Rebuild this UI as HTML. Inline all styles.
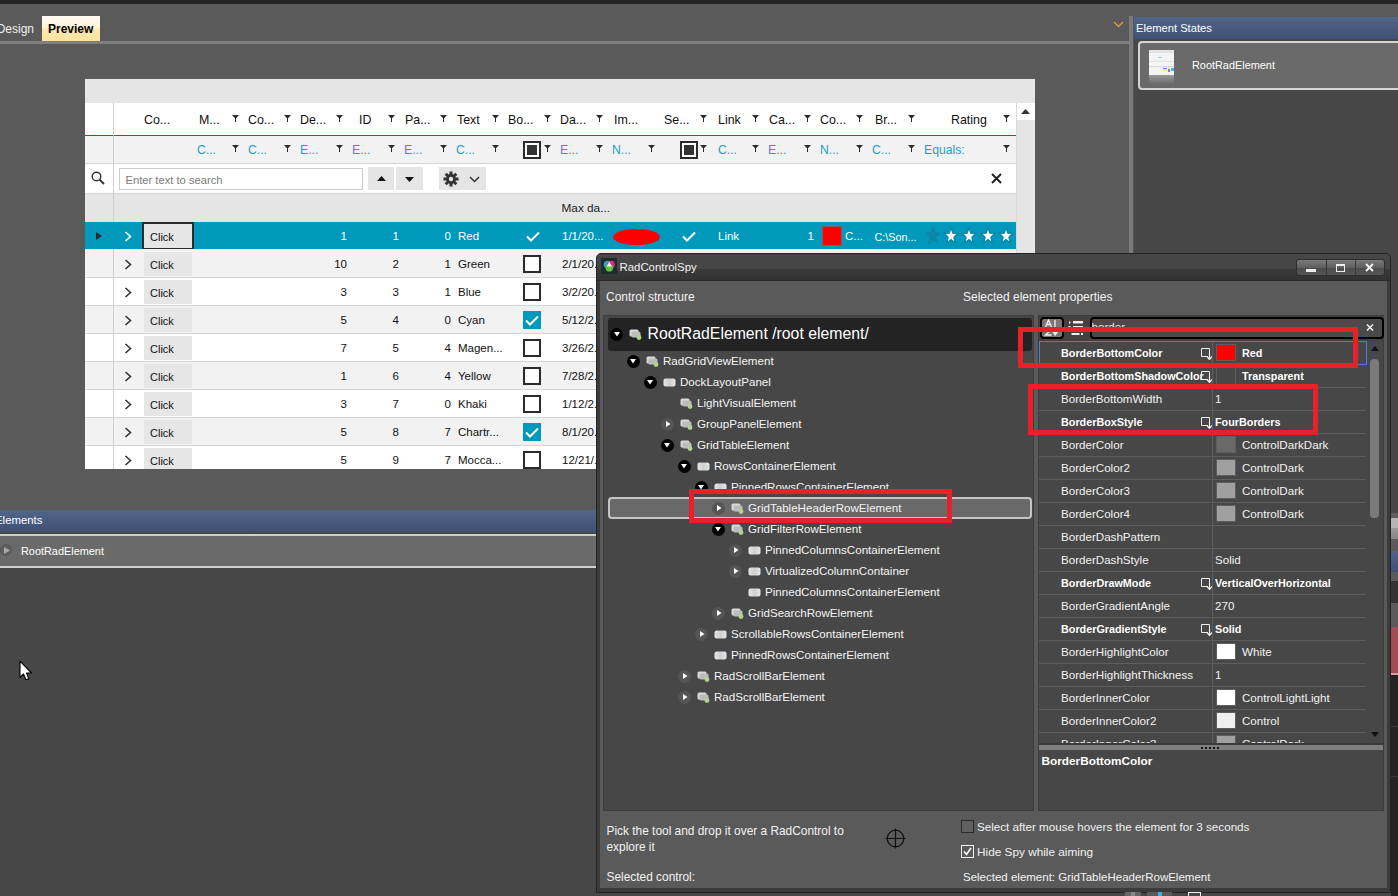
<!DOCTYPE html>
<html><head><meta charset="utf-8">
<style>
*{margin:0;padding:0;box-sizing:border-box}
html,body{width:1398px;height:896px;overflow:hidden;background:#5a5a5a;font-family:"Liberation Sans",sans-serif;font-size:12px;color:#000;position:relative}
.a{position:absolute}
.t{position:absolute;white-space:nowrap;line-height:1}
svg.a{display:block}
</style></head><body>
<div class="a" style="left:0px;top:0px;width:1398px;height:4px;background:#232323"></div>
<div class="t" style="left:-26px;width:60px;text-align:right;top:22.84px;font-size:12px;color:#f0f0f0;font-weight:normal;">Design</div>
<div class="a" style="left:42px;top:16px;width:58px;height:25px;background:linear-gradient(#fffaf0 0,#fff3da 45%,#fde7ab 55%,#fde3a2 100%)"></div>
<div class="t" style="left:48px;top:22.84px;font-size:12px;color:#000;font-weight:bold;">Preview</div>
<div class="a" style="left:0px;top:41px;width:1129px;height:3px;background:#7f7f7f"></div>
<svg class="a" style="left:1113px;top:21px" width="11" height="7" viewBox="0 0 11 7"><path d="M1 1L5.5 5.5L10 1" stroke="#d9a24a" stroke-width="1.3" fill="none"/></svg>
<div class="a" style="left:1129px;top:16px;width:4px;height:880px;background:#7a7a7a"></div>
<div class="a" style="left:1133px;top:16px;width:1px;height:880px;background:#555"></div>
<div class="a" style="left:1134px;top:17px;width:264px;height:22px;background:linear-gradient(#52668a,#3e5074)"></div>
<div class="t" style="left:1136px;top:22.52px;font-size:11.2px;color:#fff;font-weight:normal;">Element States</div>
<div class="a" style="left:1134px;top:39px;width:264px;height:857px;background:#474747"></div>
<div class="a" style="left:1138px;top:41px;width:270px;height:49px;background:#6a6a6a;border:2px solid #d4d4d4;border-radius:4px"></div>
<div class="a" style="left:1149px;top:50px;width:25px;height:25px;background:#f4f4f4"></div>
<div class="a" style="left:1149px;top:50px;width:25px;height:3px;background:#e4e4e4"></div>
<div class="a" style="left:1149px;top:61px;width:25px;height:1px;background:#e0e0e0"></div>
<div class="a" style="left:1158px;top:57px;width:4px;height:1px;background:#9cd0e8"></div>
<div class="a" style="left:1149px;top:66px;width:25px;height:1px;background:#d8d8d8"></div>
<div class="a" style="left:1163px;top:68px;width:4px;height:1px;background:#7a7aff"></div>
<div class="a" style="left:1163px;top:69px;width:4px;height:2px;background:#f0f070"></div>
<div class="a" style="left:1168px;top:67px;width:2px;height:2px;background:#f0f070"></div>
<div class="a" style="left:1168px;top:69px;width:2px;height:3px;background:#9a70c0"></div>
<div class="a" style="left:1171px;top:68px;width:3px;height:3px;background:#50b0c8"></div>
<div class="a" style="left:1149px;top:75px;width:25px;height:9px;background:linear-gradient(#9a9a9a,#6a6a6a)"></div>
<div class="t" style="left:1192px;top:59.77px;font-size:10.9px;color:#fff;font-weight:normal;">RootRadElement</div>
<div class="a" style="left:0px;top:510px;width:1128px;height:22px;background:linear-gradient(#52668a,#3e5074)"></div>
<div class="t" style="left:-5px;top:515.35px;font-size:11.4px;color:#fff;font-weight:normal;">Elements</div>
<div class="a" style="left:0px;top:532px;width:1128px;height:364px;background:#474747"></div>
<div class="a" style="left:-4px;top:534px;width:1132px;height:34px;background:#6a6a6a;border-top:2px solid #cfcfcf;border-bottom:2px solid #cfcfcf"></div>
<div class="a" style="left:0px;top:544px;width:12px;height:12px;border-radius:50%;background:#5e5e5e;border:1px solid #555"></div>
<svg class="a" style="left:4px;top:546.5px" width="6" height="7" viewBox="0 0 6 7"><path d="M0 0L6 3.5L0 7Z" fill="#a8a8a8"/></svg>
<div class="t" style="left:21px;top:545.77px;font-size:10.9px;color:#fff;font-weight:normal;">RootRadElement</div>
<svg class="a" style="left:19px;top:660px" width="13" height="21" viewBox="0 0 13 21"><path d="M1 1.2V17.5L4.5 14L7 19.8L9.8 18.8L7.5 13H12.5Z" fill="#fff" stroke="#000" stroke-width="1.1" stroke-linejoin="round"/></svg>
<div class="a" style="left:0;top:0;width:1398px;height:469px;overflow:hidden">
<div class="a" style="left:85px;top:79px;width:950px;height:390px;background:#fff"></div>
<div class="a" style="left:85px;top:79px;width:950px;height:24px;background:#e5e5e5"></div>
<div class="a" style="left:85px;top:103px;width:932px;height:32px;background:#fff"></div>
<div class="a" style="left:85px;top:135px;width:932px;height:1px;background:#e8161b"></div>
<div class="a" style="left:85px;top:136px;width:932px;height:27px;background:#f2f2f2"></div>
<div class="a" style="left:85px;top:163px;width:932px;height:1px;background:#d4d4d4"></div>
<div class="a" style="left:85px;top:164px;width:932px;height:29px;background:#fff"></div>
<div class="a" style="left:85px;top:193px;width:932px;height:1px;background:#d4d4d4"></div>
<div class="a" style="left:85px;top:194px;width:932px;height:28px;background:#e5e5e5"></div>
<div class="a" style="left:113px;top:103px;width:1px;height:366px;background:#cfcfcf"></div>
<div class="a" style="left:1016px;top:103px;width:19px;height:366px;background:#e5e5e5;border-left:1px solid #d8d8d8"></div>
<div class="a" style="left:1017px;top:103px;width:18px;height:17px;background:#fff"></div>
<svg class="a" style="left:1021px;top:109px" width="9" height="5" viewBox="0 0 9 5"><path d="M0 5L4.5 0L9 5Z" fill="#333"/></svg>
<div class="t" style="left:144px;top:113.50px;font-size:12.4px;color:#111;font-weight:normal;">Co...</div>
<div class="t" style="left:199px;top:113.50px;font-size:12.4px;color:#111;font-weight:normal;">M...</div>
<div class="t" style="left:248px;top:113.50px;font-size:12.4px;color:#111;font-weight:normal;">Co...</div>
<div class="t" style="left:300px;top:113.50px;font-size:12.4px;color:#111;font-weight:normal;">De...</div>
<div class="t" style="left:359px;top:113.50px;font-size:12.4px;color:#111;font-weight:normal;">ID</div>
<div class="t" style="left:405px;top:113.50px;font-size:12.4px;color:#111;font-weight:normal;">Pa...</div>
<div class="t" style="left:457px;top:113.50px;font-size:12.4px;color:#111;font-weight:normal;">Text</div>
<div class="t" style="left:508px;top:113.50px;font-size:12.4px;color:#111;font-weight:normal;">Bo...</div>
<div class="t" style="left:560px;top:113.50px;font-size:12.4px;color:#111;font-weight:normal;">Da...</div>
<div class="t" style="left:614px;top:113.50px;font-size:12.4px;color:#111;font-weight:normal;">Im...</div>
<div class="t" style="left:664px;top:113.50px;font-size:12.4px;color:#111;font-weight:normal;">Se...</div>
<div class="t" style="left:718px;top:113.50px;font-size:12.4px;color:#111;font-weight:normal;">Link</div>
<div class="t" style="left:769px;top:113.50px;font-size:12.4px;color:#111;font-weight:normal;">Ca...</div>
<div class="t" style="left:820px;top:113.50px;font-size:12.4px;color:#111;font-weight:normal;">Co...</div>
<div class="t" style="left:875px;top:113.50px;font-size:12.4px;color:#111;font-weight:normal;">Br...</div>
<div class="t" style="left:951px;top:113.50px;font-size:12.4px;color:#111;font-weight:normal;">Rating</div>
<svg class="a" style="left:232px;top:115px" width="7" height="7" viewBox="0 0 7 7"><path d="M0 0H7L4 3.2V7H3V3.2Z" fill="#2b2b2b"/></svg>
<svg class="a" style="left:284px;top:115px" width="7" height="7" viewBox="0 0 7 7"><path d="M0 0H7L4 3.2V7H3V3.2Z" fill="#2b2b2b"/></svg>
<svg class="a" style="left:336px;top:115px" width="7" height="7" viewBox="0 0 7 7"><path d="M0 0H7L4 3.2V7H3V3.2Z" fill="#2b2b2b"/></svg>
<svg class="a" style="left:388px;top:115px" width="7" height="7" viewBox="0 0 7 7"><path d="M0 0H7L4 3.2V7H3V3.2Z" fill="#2b2b2b"/></svg>
<svg class="a" style="left:440px;top:115px" width="7" height="7" viewBox="0 0 7 7"><path d="M0 0H7L4 3.2V7H3V3.2Z" fill="#2b2b2b"/></svg>
<svg class="a" style="left:492px;top:115px" width="7" height="7" viewBox="0 0 7 7"><path d="M0 0H7L4 3.2V7H3V3.2Z" fill="#2b2b2b"/></svg>
<svg class="a" style="left:544px;top:115px" width="7" height="7" viewBox="0 0 7 7"><path d="M0 0H7L4 3.2V7H3V3.2Z" fill="#2b2b2b"/></svg>
<svg class="a" style="left:596px;top:115px" width="7" height="7" viewBox="0 0 7 7"><path d="M0 0H7L4 3.2V7H3V3.2Z" fill="#2b2b2b"/></svg>
<svg class="a" style="left:700px;top:115px" width="7" height="7" viewBox="0 0 7 7"><path d="M0 0H7L4 3.2V7H3V3.2Z" fill="#2b2b2b"/></svg>
<svg class="a" style="left:752px;top:115px" width="7" height="7" viewBox="0 0 7 7"><path d="M0 0H7L4 3.2V7H3V3.2Z" fill="#2b2b2b"/></svg>
<svg class="a" style="left:804px;top:115px" width="7" height="7" viewBox="0 0 7 7"><path d="M0 0H7L4 3.2V7H3V3.2Z" fill="#2b2b2b"/></svg>
<svg class="a" style="left:856px;top:115px" width="7" height="7" viewBox="0 0 7 7"><path d="M0 0H7L4 3.2V7H3V3.2Z" fill="#2b2b2b"/></svg>
<svg class="a" style="left:908px;top:115px" width="7" height="7" viewBox="0 0 7 7"><path d="M0 0H7L4 3.2V7H3V3.2Z" fill="#2b2b2b"/></svg>
<svg class="a" style="left:1003px;top:115px" width="7" height="7" viewBox="0 0 7 7"><path d="M0 0H7L4 3.2V7H3V3.2Z" fill="#2b2b2b"/></svg>
<div class="t" style="left:197px;top:143.67px;font-size:12.2px;color:#1e9bc8;font-weight:normal;">C...</div>
<div class="t" style="left:248px;top:143.67px;font-size:12.2px;color:#1e9bc8;font-weight:normal;">C...</div>
<div class="t" style="left:300px;top:143.67px;font-size:12.2px;color:#1e9bc8;font-weight:normal;">E...</div>
<div class="t" style="left:352px;top:143.67px;font-size:12.2px;color:#1e9bc8;font-weight:normal;">E...</div>
<div class="t" style="left:404px;top:143.67px;font-size:12.2px;color:#1e9bc8;font-weight:normal;">E...</div>
<div class="t" style="left:456px;top:143.67px;font-size:12.2px;color:#1e9bc8;font-weight:normal;">C...</div>
<div class="t" style="left:560px;top:143.67px;font-size:12.2px;color:#1e9bc8;font-weight:normal;">E...</div>
<div class="t" style="left:612px;top:143.67px;font-size:12.2px;color:#1e9bc8;font-weight:normal;">N...</div>
<div class="t" style="left:718px;top:143.67px;font-size:12.2px;color:#1e9bc8;font-weight:normal;">C...</div>
<div class="t" style="left:768px;top:143.67px;font-size:12.2px;color:#1e9bc8;font-weight:normal;">E...</div>
<div class="t" style="left:820px;top:143.67px;font-size:12.2px;color:#1e9bc8;font-weight:normal;">N...</div>
<div class="t" style="left:872px;top:143.67px;font-size:12.2px;color:#1e9bc8;font-weight:normal;">C...</div>
<div class="t" style="left:924px;top:143.67px;font-size:12.2px;color:#1e9bc8;font-weight:normal;">Equals:</div>
<svg class="a" style="left:232px;top:145px" width="7" height="7" viewBox="0 0 7 7"><path d="M0 0H7L4 3.2V7H3V3.2Z" fill="#2b2b2b"/></svg>
<svg class="a" style="left:284px;top:145px" width="7" height="7" viewBox="0 0 7 7"><path d="M0 0H7L4 3.2V7H3V3.2Z" fill="#2b2b2b"/></svg>
<svg class="a" style="left:336px;top:145px" width="7" height="7" viewBox="0 0 7 7"><path d="M0 0H7L4 3.2V7H3V3.2Z" fill="#2b2b2b"/></svg>
<svg class="a" style="left:388px;top:145px" width="7" height="7" viewBox="0 0 7 7"><path d="M0 0H7L4 3.2V7H3V3.2Z" fill="#2b2b2b"/></svg>
<svg class="a" style="left:440px;top:145px" width="7" height="7" viewBox="0 0 7 7"><path d="M0 0H7L4 3.2V7H3V3.2Z" fill="#2b2b2b"/></svg>
<svg class="a" style="left:492px;top:145px" width="7" height="7" viewBox="0 0 7 7"><path d="M0 0H7L4 3.2V7H3V3.2Z" fill="#2b2b2b"/></svg>
<svg class="a" style="left:544px;top:145px" width="7" height="7" viewBox="0 0 7 7"><path d="M0 0H7L4 3.2V7H3V3.2Z" fill="#2b2b2b"/></svg>
<svg class="a" style="left:596px;top:145px" width="7" height="7" viewBox="0 0 7 7"><path d="M0 0H7L4 3.2V7H3V3.2Z" fill="#2b2b2b"/></svg>
<svg class="a" style="left:648px;top:145px" width="7" height="7" viewBox="0 0 7 7"><path d="M0 0H7L4 3.2V7H3V3.2Z" fill="#2b2b2b"/></svg>
<svg class="a" style="left:700px;top:145px" width="7" height="7" viewBox="0 0 7 7"><path d="M0 0H7L4 3.2V7H3V3.2Z" fill="#2b2b2b"/></svg>
<svg class="a" style="left:752px;top:145px" width="7" height="7" viewBox="0 0 7 7"><path d="M0 0H7L4 3.2V7H3V3.2Z" fill="#2b2b2b"/></svg>
<svg class="a" style="left:804px;top:145px" width="7" height="7" viewBox="0 0 7 7"><path d="M0 0H7L4 3.2V7H3V3.2Z" fill="#2b2b2b"/></svg>
<svg class="a" style="left:856px;top:145px" width="7" height="7" viewBox="0 0 7 7"><path d="M0 0H7L4 3.2V7H3V3.2Z" fill="#2b2b2b"/></svg>
<svg class="a" style="left:908px;top:145px" width="7" height="7" viewBox="0 0 7 7"><path d="M0 0H7L4 3.2V7H3V3.2Z" fill="#2b2b2b"/></svg>
<svg class="a" style="left:1003px;top:145px" width="7" height="7" viewBox="0 0 7 7"><path d="M0 0H7L4 3.2V7H3V3.2Z" fill="#2b2b2b"/></svg>
<div class="a" style="left:523px;top:141px;width:18px;height:18px;border:2px solid #2b2b2b;background:#fff"></div>
<div class="a" style="left:527px;top:145px;width:10px;height:10px;background:#333"></div>
<div class="a" style="left:680px;top:141px;width:18px;height:18px;border:2px solid #2b2b2b;background:#fff"></div>
<div class="a" style="left:684px;top:145px;width:10px;height:10px;background:#333"></div>
<svg class="a" style="left:91px;top:171px" width="14" height="14" viewBox="0 0 14 14"><circle cx="5.5" cy="5.5" r="4.3" stroke="#333" stroke-width="1.4" fill="none"/><path d="M8.6 8.6L13 13" stroke="#333" stroke-width="2"/></svg>
<div class="a" style="left:119px;top:168px;width:244px;height:22px;border:1px solid #cdcdcd;background:#fff"></div>
<div class="t" style="left:125.5px;top:175.02px;font-size:11.2px;color:#7a7a7a;font-weight:normal;">Enter text to search</div>
<div class="a" style="left:368px;top:167px;width:26px;height:23px;background:#e5e5e5"></div>
<div class="a" style="left:396px;top:167px;width:27px;height:23px;background:#e5e5e5"></div>
<svg class="a" style="left:377px;top:176px" width="9" height="5" viewBox="0 0 9 5"><path d="M0 5L4.5 0L9 5Z" fill="#111"/></svg>
<svg class="a" style="left:405px;top:177px" width="9" height="5" viewBox="0 0 9 5"><path d="M0 0L4.5 5L9 0Z" fill="#111"/></svg>
<div class="a" style="left:439px;top:167px;width:47px;height:23px;background:#e5e5e5"></div>
<svg class="a" style="left:443px;top:171px" width="16" height="16" viewBox="0 0 16 16"><g fill="#333"><circle cx="8" cy="8" r="5"/><rect x="6.5" y="0.5" width="3" height="15"/><rect x="0.5" y="6.5" width="15" height="3"/><rect x="6.5" y="0.5" width="3" height="15" transform="rotate(45 8 8)"/><rect x="6.5" y="0.5" width="3" height="15" transform="rotate(-45 8 8)"/></g><circle cx="8" cy="8" r="2.2" fill="#e5e5e5"/></svg>
<svg class="a" style="left:469px;top:176px" width="11" height="7" viewBox="0 0 11 7"><path d="M1 1L5.5 5.5L10 1" stroke="#333" stroke-width="1.5" fill="none"/></svg>
<svg class="a" style="left:991px;top:173px" width="11" height="11" viewBox="0 0 11 11"><path d="M1 1L10 10M10 1L1 10" stroke="#222" stroke-width="2"/></svg>
<div class="t" style="left:561.5px;top:203.01px;font-size:11.8px;color:#222;font-weight:normal;">Max da...</div>
<div class="a" style="left:85px;top:222px;width:931px;height:27px;background:#0099bc"></div>
<svg class="a" style="left:96px;top:232px" width="6" height="8" viewBox="0 0 6 8"><path d="M0 0L6 4L0 8Z" fill="#2b2b2b"/></svg>
<svg class="a" style="left:124px;top:231px" width="8" height="11" viewBox="0 0 8 11"><path d="M1.5 1L6.5 5.5L1.5 10" stroke="#fff" stroke-width="1.6" fill="none"/></svg>
<div class="a" style="left:142px;top:222px;width:52px;height:28px;background:#e6e6e6;border:2px solid #2b2b2b"></div>
<div class="t" style="left:150px;top:231.69px;font-size:11px;color:#111;font-weight:normal;">Click</div>
<div class="t" style="left:307px;width:40px;text-align:right;top:231.27px;font-size:11.5px;color:#fff;font-weight:normal;">1</div>
<div class="t" style="left:359px;width:40px;text-align:right;top:231.27px;font-size:11.5px;color:#fff;font-weight:normal;">1</div>
<div class="t" style="left:411px;width:40px;text-align:right;top:231.27px;font-size:11.5px;color:#fff;font-weight:normal;">0</div>
<div class="t" style="left:458px;top:231.27px;font-size:11.5px;color:#fff;font-weight:normal;">Red</div>
<svg class="a" style="left:526px;top:231px" width="14" height="11" viewBox="0 0 14 11"><path d="M1 5.5L5 9.5L13 1.5" stroke="#fff" stroke-width="2" fill="none"/></svg>
<div class="t" style="left:562px;top:231.27px;font-size:11.5px;color:#fff;font-weight:normal;">1/1/20...</div>
<div class="a" style="left:613px;top:229px;width:47px;height:16px;border-radius:50%;background:#f00"></div>
<svg class="a" style="left:682px;top:231px" width="14" height="11" viewBox="0 0 14 11"><path d="M1 5.5L5 9.5L13 1.5" stroke="#fff" stroke-width="2" fill="none"/></svg>
<div class="t" style="left:718px;top:231.27px;font-size:11.5px;color:#fff;font-weight:normal;">Link</div>
<div class="t" style="left:794px;width:20px;text-align:right;top:231.27px;font-size:11.5px;color:#fff;font-weight:normal;">1</div>
<div class="a" style="left:822px;top:226px;width:20px;height:20px;background:#f00;border:1px solid #8a5a5a"></div>
<div class="t" style="left:845px;top:231.27px;font-size:11.5px;color:#fff;font-weight:normal;">C...</div>
<div class="t" style="left:874.5px;top:231.86px;font-size:10.8px;color:#fff;font-weight:normal;">C:\Son...</div>
<svg class="a" style="left:924px;top:225px" width="18" height="21" viewBox="0 0 18 18" preserveAspectRatio="none"><path d="M9 0.5L11.2 6.3L17.5 6.6L12.6 10.6L14.3 16.8L9 13.3L3.7 16.8L5.4 10.6L0.5 6.6L6.8 6.3Z" fill="#0b86a6"/></svg>
<svg class="a" style="left:942px;top:225px" width="18" height="21" viewBox="0 0 18 18" preserveAspectRatio="none"><path d="M9 0.5L11.2 6.3L17.5 6.6L12.6 10.6L14.3 16.8L9 13.3L3.7 16.8L5.4 10.6L0.5 6.6L6.8 6.3Z" fill="#0b86a6"/><path d="M9 4L10.3 7.6L14.2 7.8L11.2 10.2L12.2 14L9 11.8L5.8 14L6.8 10.2L3.8 7.8L7.7 7.6Z" fill="#fff"/></svg>
<svg class="a" style="left:960px;top:225px" width="18" height="21" viewBox="0 0 18 18" preserveAspectRatio="none"><path d="M9 0.5L11.2 6.3L17.5 6.6L12.6 10.6L14.3 16.8L9 13.3L3.7 16.8L5.4 10.6L0.5 6.6L6.8 6.3Z" fill="#0b86a6"/><path d="M9 4L10.3 7.6L14.2 7.8L11.2 10.2L12.2 14L9 11.8L5.8 14L6.8 10.2L3.8 7.8L7.7 7.6Z" fill="#fff"/></svg>
<svg class="a" style="left:979px;top:225px" width="18" height="21" viewBox="0 0 18 18" preserveAspectRatio="none"><path d="M9 0.5L11.2 6.3L17.5 6.6L12.6 10.6L14.3 16.8L9 13.3L3.7 16.8L5.4 10.6L0.5 6.6L6.8 6.3Z" fill="#0b86a6"/><path d="M9 4L10.3 7.6L14.2 7.8L11.2 10.2L12.2 14L9 11.8L5.8 14L6.8 10.2L3.8 7.8L7.7 7.6Z" fill="#fff"/></svg>
<svg class="a" style="left:997px;top:225px" width="18" height="21" viewBox="0 0 18 18" preserveAspectRatio="none"><path d="M9 0.5L11.2 6.3L17.5 6.6L12.6 10.6L14.3 16.8L9 13.3L3.7 16.8L5.4 10.6L0.5 6.6L6.8 6.3Z" fill="#0b86a6"/><path d="M9 4L10.3 7.6L14.2 7.8L11.2 10.2L12.2 14L9 11.8L5.8 14L6.8 10.2L3.8 7.8L7.7 7.6Z" fill="#fff"/></svg>
<div class="a" style="left:85px;top:249px;width:931px;height:28px;background:#f2f2f2"></div>
<div class="a" style="left:113px;top:249px;width:1px;height:28px;background:#cfcfcf"></div>
<svg class="a" style="left:124px;top:259px" width="8" height="11" viewBox="0 0 8 11"><path d="M1.5 1L6.5 5.5L1.5 10" stroke="#333" stroke-width="1.6" fill="none"/></svg>
<div class="a" style="left:144px;top:252px;width:48px;height:24px;background:#e6e6e6"></div>
<div class="t" style="left:150px;top:259.69px;font-size:11px;color:#111;font-weight:normal;">Click</div>
<div class="t" style="left:307px;width:40px;text-align:right;top:259.27px;font-size:11.5px;color:#111;font-weight:normal;">10</div>
<div class="t" style="left:359px;width:40px;text-align:right;top:259.27px;font-size:11.5px;color:#111;font-weight:normal;">2</div>
<div class="t" style="left:411px;width:40px;text-align:right;top:259.27px;font-size:11.5px;color:#111;font-weight:normal;">1</div>
<div class="t" style="left:458px;top:259.27px;font-size:11.5px;color:#111;font-weight:normal;">Green</div>
<div class="a" style="left:523px;top:255px;width:18px;height:18px;border:2px solid #2b2b2b;background:#fff"></div>
<div class="t" style="left:562px;top:259.27px;font-size:11.5px;color:#111;font-weight:normal;">2/1/20...</div>
<div class="a" style="left:85px;top:277px;width:931px;height:28px;background:#fff"></div>
<div class="a" style="left:113px;top:277px;width:1px;height:28px;background:#cfcfcf"></div>
<svg class="a" style="left:124px;top:287px" width="8" height="11" viewBox="0 0 8 11"><path d="M1.5 1L6.5 5.5L1.5 10" stroke="#333" stroke-width="1.6" fill="none"/></svg>
<div class="a" style="left:144px;top:280px;width:48px;height:24px;background:#e6e6e6"></div>
<div class="t" style="left:150px;top:287.69px;font-size:11px;color:#111;font-weight:normal;">Click</div>
<div class="t" style="left:307px;width:40px;text-align:right;top:287.27px;font-size:11.5px;color:#111;font-weight:normal;">3</div>
<div class="t" style="left:359px;width:40px;text-align:right;top:287.27px;font-size:11.5px;color:#111;font-weight:normal;">3</div>
<div class="t" style="left:411px;width:40px;text-align:right;top:287.27px;font-size:11.5px;color:#111;font-weight:normal;">1</div>
<div class="t" style="left:458px;top:287.27px;font-size:11.5px;color:#111;font-weight:normal;">Blue</div>
<div class="a" style="left:523px;top:283px;width:18px;height:18px;border:2px solid #2b2b2b;background:#fff"></div>
<div class="t" style="left:562px;top:287.27px;font-size:11.5px;color:#111;font-weight:normal;">3/2/20...</div>
<div class="a" style="left:85px;top:305px;width:931px;height:28px;background:#f2f2f2"></div>
<div class="a" style="left:113px;top:305px;width:1px;height:28px;background:#cfcfcf"></div>
<svg class="a" style="left:124px;top:315px" width="8" height="11" viewBox="0 0 8 11"><path d="M1.5 1L6.5 5.5L1.5 10" stroke="#333" stroke-width="1.6" fill="none"/></svg>
<div class="a" style="left:144px;top:308px;width:48px;height:24px;background:#e6e6e6"></div>
<div class="t" style="left:150px;top:315.69px;font-size:11px;color:#111;font-weight:normal;">Click</div>
<div class="t" style="left:307px;width:40px;text-align:right;top:315.27px;font-size:11.5px;color:#111;font-weight:normal;">5</div>
<div class="t" style="left:359px;width:40px;text-align:right;top:315.27px;font-size:11.5px;color:#111;font-weight:normal;">4</div>
<div class="t" style="left:411px;width:40px;text-align:right;top:315.27px;font-size:11.5px;color:#111;font-weight:normal;">0</div>
<div class="t" style="left:458px;top:315.27px;font-size:11.5px;color:#111;font-weight:normal;">Cyan</div>
<div class="a" style="left:523px;top:311px;width:18px;height:18px;background:#0099bc"></div>
<svg class="a" style="left:525px;top:315px" width="14" height="11" viewBox="0 0 14 11"><path d="M1 5.5L5 9.5L13 1.5" stroke="#fff" stroke-width="2" fill="none"/></svg>
<div class="t" style="left:562px;top:315.27px;font-size:11.5px;color:#111;font-weight:normal;">5/12/2...</div>
<div class="a" style="left:85px;top:333px;width:931px;height:28px;background:#fff"></div>
<div class="a" style="left:113px;top:333px;width:1px;height:28px;background:#cfcfcf"></div>
<svg class="a" style="left:124px;top:343px" width="8" height="11" viewBox="0 0 8 11"><path d="M1.5 1L6.5 5.5L1.5 10" stroke="#333" stroke-width="1.6" fill="none"/></svg>
<div class="a" style="left:144px;top:336px;width:48px;height:24px;background:#e6e6e6"></div>
<div class="t" style="left:150px;top:343.69px;font-size:11px;color:#111;font-weight:normal;">Click</div>
<div class="t" style="left:307px;width:40px;text-align:right;top:343.27px;font-size:11.5px;color:#111;font-weight:normal;">7</div>
<div class="t" style="left:359px;width:40px;text-align:right;top:343.27px;font-size:11.5px;color:#111;font-weight:normal;">5</div>
<div class="t" style="left:411px;width:40px;text-align:right;top:343.27px;font-size:11.5px;color:#111;font-weight:normal;">4</div>
<div class="t" style="left:458px;top:343.27px;font-size:11.5px;color:#111;font-weight:normal;">Magen...</div>
<div class="a" style="left:523px;top:339px;width:18px;height:18px;border:2px solid #2b2b2b;background:#fff"></div>
<div class="t" style="left:562px;top:343.27px;font-size:11.5px;color:#111;font-weight:normal;">3/26/2...</div>
<div class="a" style="left:85px;top:361px;width:931px;height:28px;background:#f2f2f2"></div>
<div class="a" style="left:113px;top:361px;width:1px;height:28px;background:#cfcfcf"></div>
<svg class="a" style="left:124px;top:371px" width="8" height="11" viewBox="0 0 8 11"><path d="M1.5 1L6.5 5.5L1.5 10" stroke="#333" stroke-width="1.6" fill="none"/></svg>
<div class="a" style="left:144px;top:364px;width:48px;height:24px;background:#e6e6e6"></div>
<div class="t" style="left:150px;top:371.69px;font-size:11px;color:#111;font-weight:normal;">Click</div>
<div class="t" style="left:307px;width:40px;text-align:right;top:371.27px;font-size:11.5px;color:#111;font-weight:normal;">1</div>
<div class="t" style="left:359px;width:40px;text-align:right;top:371.27px;font-size:11.5px;color:#111;font-weight:normal;">6</div>
<div class="t" style="left:411px;width:40px;text-align:right;top:371.27px;font-size:11.5px;color:#111;font-weight:normal;">4</div>
<div class="t" style="left:458px;top:371.27px;font-size:11.5px;color:#111;font-weight:normal;">Yellow</div>
<div class="a" style="left:523px;top:367px;width:18px;height:18px;border:2px solid #2b2b2b;background:#fff"></div>
<div class="t" style="left:562px;top:371.27px;font-size:11.5px;color:#111;font-weight:normal;">7/28/2...</div>
<div class="a" style="left:85px;top:389px;width:931px;height:28px;background:#fff"></div>
<div class="a" style="left:113px;top:389px;width:1px;height:28px;background:#cfcfcf"></div>
<svg class="a" style="left:124px;top:399px" width="8" height="11" viewBox="0 0 8 11"><path d="M1.5 1L6.5 5.5L1.5 10" stroke="#333" stroke-width="1.6" fill="none"/></svg>
<div class="a" style="left:144px;top:392px;width:48px;height:24px;background:#e6e6e6"></div>
<div class="t" style="left:150px;top:399.69px;font-size:11px;color:#111;font-weight:normal;">Click</div>
<div class="t" style="left:307px;width:40px;text-align:right;top:399.27px;font-size:11.5px;color:#111;font-weight:normal;">3</div>
<div class="t" style="left:359px;width:40px;text-align:right;top:399.27px;font-size:11.5px;color:#111;font-weight:normal;">7</div>
<div class="t" style="left:411px;width:40px;text-align:right;top:399.27px;font-size:11.5px;color:#111;font-weight:normal;">0</div>
<div class="t" style="left:458px;top:399.27px;font-size:11.5px;color:#111;font-weight:normal;">Khaki</div>
<div class="a" style="left:523px;top:395px;width:18px;height:18px;border:2px solid #2b2b2b;background:#fff"></div>
<div class="t" style="left:562px;top:399.27px;font-size:11.5px;color:#111;font-weight:normal;">1/12/2...</div>
<div class="a" style="left:85px;top:417px;width:931px;height:28px;background:#f2f2f2"></div>
<div class="a" style="left:113px;top:417px;width:1px;height:28px;background:#cfcfcf"></div>
<svg class="a" style="left:124px;top:427px" width="8" height="11" viewBox="0 0 8 11"><path d="M1.5 1L6.5 5.5L1.5 10" stroke="#333" stroke-width="1.6" fill="none"/></svg>
<div class="a" style="left:144px;top:420px;width:48px;height:24px;background:#e6e6e6"></div>
<div class="t" style="left:150px;top:427.69px;font-size:11px;color:#111;font-weight:normal;">Click</div>
<div class="t" style="left:307px;width:40px;text-align:right;top:427.27px;font-size:11.5px;color:#111;font-weight:normal;">5</div>
<div class="t" style="left:359px;width:40px;text-align:right;top:427.27px;font-size:11.5px;color:#111;font-weight:normal;">8</div>
<div class="t" style="left:411px;width:40px;text-align:right;top:427.27px;font-size:11.5px;color:#111;font-weight:normal;">7</div>
<div class="t" style="left:458px;top:427.27px;font-size:11.5px;color:#111;font-weight:normal;">Chartr...</div>
<div class="a" style="left:523px;top:423px;width:18px;height:18px;background:#0099bc"></div>
<svg class="a" style="left:525px;top:427px" width="14" height="11" viewBox="0 0 14 11"><path d="M1 5.5L5 9.5L13 1.5" stroke="#fff" stroke-width="2" fill="none"/></svg>
<div class="t" style="left:562px;top:427.27px;font-size:11.5px;color:#111;font-weight:normal;">8/1/20...</div>
<div class="a" style="left:85px;top:445px;width:931px;height:28px;background:#fff"></div>
<div class="a" style="left:113px;top:445px;width:1px;height:28px;background:#cfcfcf"></div>
<svg class="a" style="left:124px;top:455px" width="8" height="11" viewBox="0 0 8 11"><path d="M1.5 1L6.5 5.5L1.5 10" stroke="#333" stroke-width="1.6" fill="none"/></svg>
<div class="a" style="left:144px;top:448px;width:48px;height:24px;background:#e6e6e6"></div>
<div class="t" style="left:150px;top:455.69px;font-size:11px;color:#111;font-weight:normal;">Click</div>
<div class="t" style="left:307px;width:40px;text-align:right;top:455.27px;font-size:11.5px;color:#111;font-weight:normal;">5</div>
<div class="t" style="left:359px;width:40px;text-align:right;top:455.27px;font-size:11.5px;color:#111;font-weight:normal;">9</div>
<div class="t" style="left:411px;width:40px;text-align:right;top:455.27px;font-size:11.5px;color:#111;font-weight:normal;">7</div>
<div class="t" style="left:458px;top:455.27px;font-size:11.5px;color:#111;font-weight:normal;">Mocca...</div>
<div class="a" style="left:523px;top:451px;width:18px;height:18px;border:2px solid #2b2b2b;background:#fff"></div>
<div class="t" style="left:562px;top:455.27px;font-size:11.5px;color:#111;font-weight:normal;">12/21/...</div>
<div class="a" style="left:85px;top:277px;width:931px;height:1px;background:#d4d4d4"></div>
<div class="a" style="left:85px;top:305px;width:931px;height:1px;background:#d4d4d4"></div>
<div class="a" style="left:85px;top:333px;width:931px;height:1px;background:#d4d4d4"></div>
<div class="a" style="left:85px;top:361px;width:931px;height:1px;background:#d4d4d4"></div>
<div class="a" style="left:85px;top:389px;width:931px;height:1px;background:#d4d4d4"></div>
<div class="a" style="left:85px;top:417px;width:931px;height:1px;background:#d4d4d4"></div>
<div class="a" style="left:85px;top:445px;width:931px;height:1px;background:#d4d4d4"></div>
<div class="a" style="left:85px;top:473px;width:931px;height:1px;background:#d4d4d4"></div>
</div>
<div class="a" style="left:596px;top:253px;width:795px;height:640px;background:#3b3b3b;border:1px solid #232323;border-radius:5px 5px 0 0"></div>
<div class="a" style="left:597px;top:254px;width:793px;height:15px;background:#464646;border-radius:4px 4px 0 0"></div>
<div class="a" style="left:597px;top:269px;width:793px;height:11px;background:linear-gradient(#3a3a3a,#333)"></div>
<div class="a" style="left:597px;top:280px;width:793px;height:1px;background:#2a2a2a"></div>
<div class="a" style="left:600px;top:281px;width:787px;height:607px;background:#5a5a5a"></div>
<div class="a" style="left:601px;top:258px;width:16px;height:16px;background:#1e2a2d"></div>
<svg class="a" style="left:601px;top:258px" width="16" height="16" viewBox="0 0 16 16"><circle cx="6.6" cy="6.6" r="3.9" fill="#2aa6c4"/><circle cx="10" cy="6.6" r="3.9" fill="#d4307a"/><circle cx="8.3" cy="9.9" r="3.7" fill="#5cc43c"/><path d="M8.3 3.2L10.8 8.6L5.8 8.6Z" fill="#fff" opacity="0.9"/></svg>
<div class="t" style="left:619.5px;top:262.35px;font-size:11.4px;color:#f2f2f2;font-weight:normal;">RadControlSpy</div>
<div class="a" style="left:1296px;top:259px;width:89px;height:17px;border:1px solid #2e2e2e;border-radius:3px;background:linear-gradient(#7a7a7a,#5e5e5e 50%,#4c4c4c 51%,#555);"></div>
<div class="a" style="left:1326px;top:260px;width:1px;height:15px;background:#3a3a3a"></div>
<div class="a" style="left:1355px;top:260px;width:1px;height:15px;background:#3a3a3a"></div>
<div class="a" style="left:1306px;top:269px;width:10px;height:3px;background:#eee"></div>
<div class="a" style="left:1336px;top:264px;width:9px;height:8px;border:1px solid #eee;border-top:2px solid #eee"></div>
<svg class="a" style="left:1365px;top:263px" width="9" height="9" viewBox="0 0 9 9"><path d="M1 1L8 8M8 1L1 8" stroke="#f4f4f4" stroke-width="2"/></svg>
<div class="t" style="left:606px;top:290.84px;font-size:12px;color:#f2f2f2;font-weight:normal;">Control structure</div>
<div class="t" style="left:963px;top:290.84px;font-size:12px;color:#f2f2f2;font-weight:normal;">Selected element properties</div>
<div class="a" style="left:603px;top:315px;width:431px;height:496px;background:#474747;border:1px solid #3d3d3d"></div>
<div class="a" style="left:608px;top:318px;width:424px;height:33px;background:#232323;border-radius:3px"></div>
<div class="a" style="left:610.0px;top:327.5px;width:13px;height:13px;border-radius:50%;background:#000"></div>
<svg class="a" style="left:613.5px;top:332px" width="6" height="5" viewBox="0 0 6 5"><path d="M0 0H6L3 4.5Z" fill="#fff"/></svg>
<svg class="a" style="left:629px;top:328.5px" width="13" height="11" viewBox="0 0 13 11"><rect x="0.5" y="0.5" width="9" height="7" rx="1.5" fill="#d8d8d8"/><rect x="2.5" y="2.5" width="9" height="6" rx="1.5" fill="#bcbcbc"/><circle cx="10" cy="8.5" r="2.4" fill="#b4d48a"/></svg>
<div class="t" style="left:647.5px;top:325.63px;font-size:15.8px;color:#fff;font-weight:normal;">RootRadElement /root element/</div>
<div class="a" style="left:626.5px;top:354.5px;width:13px;height:13px;border-radius:50%;background:#000"></div>
<svg class="a" style="left:630px;top:359px" width="6" height="5" viewBox="0 0 6 5"><path d="M0 0H6L3 4.5Z" fill="#fff"/></svg>
<svg class="a" style="left:646px;top:356px" width="13" height="11" viewBox="0 0 13 11"><rect x="0.5" y="0.5" width="9" height="7" rx="1.5" fill="#d8d8d8"/><rect x="2.5" y="2.5" width="9" height="6" rx="1.5" fill="#bcbcbc"/><circle cx="10" cy="8.5" r="2.4" fill="#b4d48a"/></svg>
<div class="t" style="left:663px;top:355.18px;font-size:11.6px;color:#f4f4f4;font-weight:normal;">RadGridViewElement</div>
<div class="a" style="left:643.5px;top:375.5px;width:13px;height:13px;border-radius:50%;background:#000"></div>
<svg class="a" style="left:647px;top:380px" width="6" height="5" viewBox="0 0 6 5"><path d="M0 0H6L3 4.5Z" fill="#fff"/></svg>
<svg class="a" style="left:663px;top:378px" width="13" height="9" viewBox="0 0 13 9"><defs><linearGradient id="pg" x1="0" x2="1"><stop offset="0" stop-color="#e6e6e6"/><stop offset="0.5" stop-color="#cfcfcf"/><stop offset="1" stop-color="#e6e6e6"/></linearGradient></defs><rect x="0.5" y="0.5" width="12" height="8" rx="2" fill="url(#pg)"/></svg>
<div class="t" style="left:680px;top:376.18px;font-size:11.6px;color:#f4f4f4;font-weight:normal;">DockLayoutPanel</div>
<svg class="a" style="left:680px;top:398px" width="13" height="11" viewBox="0 0 13 11"><rect x="0.5" y="0.5" width="9" height="7" rx="1.5" fill="#d8d8d8"/><rect x="2.5" y="2.5" width="9" height="6" rx="1.5" fill="#bcbcbc"/><circle cx="10" cy="8.5" r="2.4" fill="#b4d48a"/></svg>
<div class="t" style="left:697px;top:397.18px;font-size:11.6px;color:#f4f4f4;font-weight:normal;">LightVisualElement</div>
<div class="a" style="left:660.5px;top:417.5px;width:13px;height:13px;border-radius:50%;background:#555"></div>
<svg class="a" style="left:665.5px;top:421px" width="5" height="6" viewBox="0 0 5 6"><path d="M0 0L4.5 3L0 6Z" fill="#fff"/></svg>
<svg class="a" style="left:680px;top:419px" width="13" height="11" viewBox="0 0 13 11"><rect x="0.5" y="0.5" width="9" height="7" rx="1.5" fill="#d8d8d8"/><rect x="2.5" y="2.5" width="9" height="6" rx="1.5" fill="#bcbcbc"/><circle cx="10" cy="8.5" r="2.4" fill="#b4d48a"/></svg>
<div class="t" style="left:697px;top:418.18px;font-size:11.6px;color:#f4f4f4;font-weight:normal;">GroupPanelElement</div>
<div class="a" style="left:660.5px;top:438.5px;width:13px;height:13px;border-radius:50%;background:#000"></div>
<svg class="a" style="left:664px;top:443px" width="6" height="5" viewBox="0 0 6 5"><path d="M0 0H6L3 4.5Z" fill="#fff"/></svg>
<svg class="a" style="left:680px;top:440px" width="13" height="11" viewBox="0 0 13 11"><rect x="0.5" y="0.5" width="9" height="7" rx="1.5" fill="#d8d8d8"/><rect x="2.5" y="2.5" width="9" height="6" rx="1.5" fill="#bcbcbc"/><circle cx="10" cy="8.5" r="2.4" fill="#b4d48a"/></svg>
<div class="t" style="left:697px;top:439.18px;font-size:11.6px;color:#f4f4f4;font-weight:normal;">GridTableElement</div>
<div class="a" style="left:677.5px;top:459.5px;width:13px;height:13px;border-radius:50%;background:#000"></div>
<svg class="a" style="left:681px;top:464px" width="6" height="5" viewBox="0 0 6 5"><path d="M0 0H6L3 4.5Z" fill="#fff"/></svg>
<svg class="a" style="left:697px;top:462px" width="13" height="9" viewBox="0 0 13 9"><defs><linearGradient id="pg" x1="0" x2="1"><stop offset="0" stop-color="#e6e6e6"/><stop offset="0.5" stop-color="#cfcfcf"/><stop offset="1" stop-color="#e6e6e6"/></linearGradient></defs><rect x="0.5" y="0.5" width="12" height="8" rx="2" fill="url(#pg)"/></svg>
<div class="t" style="left:714px;top:460.18px;font-size:11.6px;color:#f4f4f4;font-weight:normal;">RowsContainerElement</div>
<div class="a" style="left:694.5px;top:480.5px;width:13px;height:13px;border-radius:50%;background:#000"></div>
<svg class="a" style="left:698px;top:485px" width="6" height="5" viewBox="0 0 6 5"><path d="M0 0H6L3 4.5Z" fill="#fff"/></svg>
<svg class="a" style="left:714px;top:483px" width="13" height="9" viewBox="0 0 13 9"><defs><linearGradient id="pg" x1="0" x2="1"><stop offset="0" stop-color="#e6e6e6"/><stop offset="0.5" stop-color="#cfcfcf"/><stop offset="1" stop-color="#e6e6e6"/></linearGradient></defs><rect x="0.5" y="0.5" width="12" height="8" rx="2" fill="url(#pg)"/></svg>
<div class="t" style="left:731px;top:481.18px;font-size:11.6px;color:#f4f4f4;font-weight:normal;">PinnedRowsContainerElement</div>
<div class="a" style="left:608px;top:497px;width:424px;height:22px;background:#696969;border:2px solid #c4c4c4;border-radius:4px"></div>
<div class="a" style="left:711.5px;top:501.5px;width:13px;height:13px;border-radius:50%;background:#555"></div>
<svg class="a" style="left:716.5px;top:505px" width="5" height="6" viewBox="0 0 5 6"><path d="M0 0L4.5 3L0 6Z" fill="#fff"/></svg>
<svg class="a" style="left:731px;top:503px" width="13" height="11" viewBox="0 0 13 11"><rect x="0.5" y="0.5" width="9" height="7" rx="1.5" fill="#d8d8d8"/><rect x="2.5" y="2.5" width="9" height="6" rx="1.5" fill="#bcbcbc"/><circle cx="10" cy="8.5" r="2.4" fill="#b4d48a"/></svg>
<div class="t" style="left:748px;top:502.18px;font-size:11.6px;color:#f4f4f4;font-weight:normal;">GridTableHeaderRowElement</div>
<div class="a" style="left:711.5px;top:522.5px;width:13px;height:13px;border-radius:50%;background:#000"></div>
<svg class="a" style="left:715px;top:527px" width="6" height="5" viewBox="0 0 6 5"><path d="M0 0H6L3 4.5Z" fill="#fff"/></svg>
<svg class="a" style="left:731px;top:524px" width="13" height="11" viewBox="0 0 13 11"><rect x="0.5" y="0.5" width="9" height="7" rx="1.5" fill="#d8d8d8"/><rect x="2.5" y="2.5" width="9" height="6" rx="1.5" fill="#bcbcbc"/><circle cx="10" cy="8.5" r="2.4" fill="#b4d48a"/></svg>
<div class="t" style="left:748px;top:523.18px;font-size:11.6px;color:#f4f4f4;font-weight:normal;">GridFilterRowElement</div>
<div class="a" style="left:728.5px;top:543.5px;width:13px;height:13px;border-radius:50%;background:#555"></div>
<svg class="a" style="left:733.5px;top:547px" width="5" height="6" viewBox="0 0 5 6"><path d="M0 0L4.5 3L0 6Z" fill="#fff"/></svg>
<svg class="a" style="left:748px;top:546px" width="13" height="9" viewBox="0 0 13 9"><defs><linearGradient id="pg" x1="0" x2="1"><stop offset="0" stop-color="#e6e6e6"/><stop offset="0.5" stop-color="#cfcfcf"/><stop offset="1" stop-color="#e6e6e6"/></linearGradient></defs><rect x="0.5" y="0.5" width="12" height="8" rx="2" fill="url(#pg)"/></svg>
<div class="t" style="left:765px;top:544.18px;font-size:11.6px;color:#f4f4f4;font-weight:normal;">PinnedColumnsContainerElement</div>
<div class="a" style="left:728.5px;top:564.5px;width:13px;height:13px;border-radius:50%;background:#555"></div>
<svg class="a" style="left:733.5px;top:568px" width="5" height="6" viewBox="0 0 5 6"><path d="M0 0L4.5 3L0 6Z" fill="#fff"/></svg>
<svg class="a" style="left:748px;top:567px" width="13" height="9" viewBox="0 0 13 9"><defs><linearGradient id="pg" x1="0" x2="1"><stop offset="0" stop-color="#e6e6e6"/><stop offset="0.5" stop-color="#cfcfcf"/><stop offset="1" stop-color="#e6e6e6"/></linearGradient></defs><rect x="0.5" y="0.5" width="12" height="8" rx="2" fill="url(#pg)"/></svg>
<div class="t" style="left:765px;top:565.18px;font-size:11.6px;color:#f4f4f4;font-weight:normal;">VirtualizedColumnContainer</div>
<svg class="a" style="left:748px;top:588px" width="13" height="9" viewBox="0 0 13 9"><defs><linearGradient id="pg" x1="0" x2="1"><stop offset="0" stop-color="#e6e6e6"/><stop offset="0.5" stop-color="#cfcfcf"/><stop offset="1" stop-color="#e6e6e6"/></linearGradient></defs><rect x="0.5" y="0.5" width="12" height="8" rx="2" fill="url(#pg)"/></svg>
<div class="t" style="left:765px;top:586.18px;font-size:11.6px;color:#f4f4f4;font-weight:normal;">PinnedColumnsContainerElement</div>
<div class="a" style="left:711.5px;top:606.5px;width:13px;height:13px;border-radius:50%;background:#555"></div>
<svg class="a" style="left:716.5px;top:610px" width="5" height="6" viewBox="0 0 5 6"><path d="M0 0L4.5 3L0 6Z" fill="#fff"/></svg>
<svg class="a" style="left:731px;top:608px" width="13" height="11" viewBox="0 0 13 11"><rect x="0.5" y="0.5" width="9" height="7" rx="1.5" fill="#d8d8d8"/><rect x="2.5" y="2.5" width="9" height="6" rx="1.5" fill="#bcbcbc"/><circle cx="10" cy="8.5" r="2.4" fill="#b4d48a"/></svg>
<div class="t" style="left:748px;top:607.18px;font-size:11.6px;color:#f4f4f4;font-weight:normal;">GridSearchRowElement</div>
<div class="a" style="left:694.5px;top:627.5px;width:13px;height:13px;border-radius:50%;background:#555"></div>
<svg class="a" style="left:699.5px;top:631px" width="5" height="6" viewBox="0 0 5 6"><path d="M0 0L4.5 3L0 6Z" fill="#fff"/></svg>
<svg class="a" style="left:714px;top:630px" width="13" height="9" viewBox="0 0 13 9"><defs><linearGradient id="pg" x1="0" x2="1"><stop offset="0" stop-color="#e6e6e6"/><stop offset="0.5" stop-color="#cfcfcf"/><stop offset="1" stop-color="#e6e6e6"/></linearGradient></defs><rect x="0.5" y="0.5" width="12" height="8" rx="2" fill="url(#pg)"/></svg>
<div class="t" style="left:731px;top:628.18px;font-size:11.6px;color:#f4f4f4;font-weight:normal;">ScrollableRowsContainerElement</div>
<svg class="a" style="left:714px;top:651px" width="13" height="9" viewBox="0 0 13 9"><defs><linearGradient id="pg" x1="0" x2="1"><stop offset="0" stop-color="#e6e6e6"/><stop offset="0.5" stop-color="#cfcfcf"/><stop offset="1" stop-color="#e6e6e6"/></linearGradient></defs><rect x="0.5" y="0.5" width="12" height="8" rx="2" fill="url(#pg)"/></svg>
<div class="t" style="left:731px;top:649.18px;font-size:11.6px;color:#f4f4f4;font-weight:normal;">PinnedRowsContainerElement</div>
<div class="a" style="left:677.5px;top:669.5px;width:13px;height:13px;border-radius:50%;background:#555"></div>
<svg class="a" style="left:682.5px;top:673px" width="5" height="6" viewBox="0 0 5 6"><path d="M0 0L4.5 3L0 6Z" fill="#fff"/></svg>
<svg class="a" style="left:697px;top:671px" width="13" height="11" viewBox="0 0 13 11"><rect x="0.5" y="0.5" width="9" height="7" rx="1.5" fill="#d8d8d8"/><rect x="2.5" y="2.5" width="9" height="6" rx="1.5" fill="#bcbcbc"/><circle cx="10" cy="8.5" r="2.4" fill="#b4d48a"/></svg>
<div class="t" style="left:714px;top:670.18px;font-size:11.6px;color:#f4f4f4;font-weight:normal;">RadScrollBarElement</div>
<div class="a" style="left:677.5px;top:690.5px;width:13px;height:13px;border-radius:50%;background:#555"></div>
<svg class="a" style="left:682.5px;top:694px" width="5" height="6" viewBox="0 0 5 6"><path d="M0 0L4.5 3L0 6Z" fill="#fff"/></svg>
<svg class="a" style="left:697px;top:692px" width="13" height="11" viewBox="0 0 13 11"><rect x="0.5" y="0.5" width="9" height="7" rx="1.5" fill="#d8d8d8"/><rect x="2.5" y="2.5" width="9" height="6" rx="1.5" fill="#bcbcbc"/><circle cx="10" cy="8.5" r="2.4" fill="#b4d48a"/></svg>
<div class="t" style="left:714px;top:691.18px;font-size:11.6px;color:#f4f4f4;font-weight:normal;">RadScrollBarElement</div>
<div class="a" style="left:1038px;top:315px;width:346px;height:496px;background:#474747;border:1px solid #3d3d3d"></div>
<div class="a" style="left:1039px;top:316px;width:344px;height:25px;background:#424242"></div>
<div class="a" style="left:1040px;top:317px;width:24px;height:22px;border:2px solid #000;border-radius:4px;background:#777"></div>
<svg class="a" style="left:1044px;top:319px" width="17" height="18" viewBox="0 0 17 18"><path d="M1.5 8L4.5 1L7.5 8M2.5 5.5H6.5" stroke="#f0f0f0" stroke-width="1.3" fill="none"/><path d="M1.5 11H7L1.5 16H7.5" stroke="#f0f0f0" stroke-width="1.3" fill="none"/><path d="M11 1V11" stroke="#f0f0f0" stroke-width="1.3"/><path d="M8.5 13H14L11.2 17Z" fill="#f0f0f0"/></svg>
<svg class="a" style="left:1068px;top:319px" width="16" height="18" viewBox="0 0 16 18"><path d="M1 2L3 3.5L1 5Z" fill="#eee"/><rect x="5" y="2" width="10" height="2.5" fill="#eee"/><rect x="0.5" y="7" width="2" height="1.5" fill="#eee"/><rect x="5" y="7" width="10" height="2" fill="#eee"/><rect x="3.5" y="14" width="8" height="2" fill="#eee"/><rect x="13" y="14" width="2" height="2" fill="#eee"/></svg>
<div class="a" style="left:1090px;top:317px;width:294px;height:22px;border:2px solid #000;border-radius:4px;background:#4a4a4a"></div>
<div class="t" style="left:1091.5px;top:321.18px;font-size:11.6px;color:#e6e6e6;font-weight:normal;">border</div>
<svg class="a" style="left:1366px;top:324px" width="8" height="7" viewBox="0 0 8 7"><path d="M1 0.5L7 6.5M7 0.5L1 6.5" stroke="#eee" stroke-width="1.5"/></svg>
<div class="a" style="left:0;top:0;width:1398px;height:743px;overflow:hidden">
<div class="a" style="left:1039px;top:364px;width:327px;height:1px;background:#5e5e5e"></div>
<div class="a" style="left:1212px;top:341px;width:1px;height:23px;background:#5e5e5e"></div>
<div class="t" style="left:1061px;top:348.36px;font-size:10.8px;color:#fff;font-weight:bold;">BorderBottomColor</div>
<svg class="a" style="left:1201px;top:348px" width="11" height="12" viewBox="0 0 11 12"><path d="M7 8.5H0.5V0.5H8.5V5" stroke="#eee" stroke-width="1" fill="none"/><path d="M8.5 5V11M6 8.5L8.5 11.5L11 8.5" stroke="#eee" stroke-width="1.2" fill="none"/></svg>
<div class="a" style="left:1216px;top:344px;width:20px;height:17px;background:#f00;border:1px solid #5e5e5e"></div>
<div class="t" style="left:1242px;top:348.36px;font-size:10.8px;color:#fff;font-weight:bold;">Red</div>
<div class="a" style="left:1039px;top:387px;width:327px;height:1px;background:#5e5e5e"></div>
<div class="a" style="left:1212px;top:364px;width:1px;height:23px;background:#5e5e5e"></div>
<div class="t" style="left:1061px;top:371.36px;font-size:10.8px;color:#fff;font-weight:bold;">BorderBottomShadowColor</div>
<svg class="a" style="left:1201px;top:371px" width="11" height="12" viewBox="0 0 11 12"><path d="M7 8.5H0.5V0.5H8.5V5" stroke="#eee" stroke-width="1" fill="none"/><path d="M8.5 5V11M6 8.5L8.5 11.5L11 8.5" stroke="#eee" stroke-width="1.2" fill="none"/></svg>
<div class="a" style="left:1216px;top:367px;width:20px;height:17px;border-left:1px solid #5e5e5e;border-right:1px solid #5e5e5e"></div>
<div class="t" style="left:1242px;top:371.36px;font-size:10.8px;color:#fff;font-weight:bold;">Transparent</div>
<div class="a" style="left:1039px;top:410px;width:327px;height:1px;background:#5e5e5e"></div>
<div class="a" style="left:1212px;top:387px;width:1px;height:23px;background:#5e5e5e"></div>
<div class="t" style="left:1061px;top:392.68px;font-size:11.6px;color:#f2f2f2;font-weight:normal;">BorderBottomWidth</div>
<div class="t" style="left:1215px;top:392.68px;font-size:11.6px;color:#f2f2f2;font-weight:normal;">1</div>
<div class="a" style="left:1039px;top:433px;width:327px;height:1px;background:#5e5e5e"></div>
<div class="a" style="left:1212px;top:410px;width:1px;height:23px;background:#5e5e5e"></div>
<div class="t" style="left:1061px;top:417.36px;font-size:10.8px;color:#fff;font-weight:bold;">BorderBoxStyle</div>
<svg class="a" style="left:1201px;top:417px" width="11" height="12" viewBox="0 0 11 12"><path d="M7 8.5H0.5V0.5H8.5V5" stroke="#eee" stroke-width="1" fill="none"/><path d="M8.5 5V11M6 8.5L8.5 11.5L11 8.5" stroke="#eee" stroke-width="1.2" fill="none"/></svg>
<div class="t" style="left:1215px;top:417.36px;font-size:10.8px;color:#fff;font-weight:bold;">FourBorders</div>
<div class="a" style="left:1039px;top:456px;width:327px;height:1px;background:#5e5e5e"></div>
<div class="a" style="left:1212px;top:433px;width:1px;height:23px;background:#5e5e5e"></div>
<div class="t" style="left:1061px;top:438.68px;font-size:11.6px;color:#f2f2f2;font-weight:normal;">BorderColor</div>
<div class="a" style="left:1216px;top:436px;width:20px;height:17px;background:#696969;border:1px solid #5e5e5e"></div>
<div class="t" style="left:1242px;top:438.68px;font-size:11.6px;color:#f2f2f2;font-weight:normal;">ControlDarkDark</div>
<div class="a" style="left:1039px;top:479px;width:327px;height:1px;background:#5e5e5e"></div>
<div class="a" style="left:1212px;top:456px;width:1px;height:23px;background:#5e5e5e"></div>
<div class="t" style="left:1061px;top:461.68px;font-size:11.6px;color:#f2f2f2;font-weight:normal;">BorderColor2</div>
<div class="a" style="left:1216px;top:459px;width:20px;height:17px;background:#a0a0a0;border:1px solid #5e5e5e"></div>
<div class="t" style="left:1242px;top:461.68px;font-size:11.6px;color:#f2f2f2;font-weight:normal;">ControlDark</div>
<div class="a" style="left:1039px;top:502px;width:327px;height:1px;background:#5e5e5e"></div>
<div class="a" style="left:1212px;top:479px;width:1px;height:23px;background:#5e5e5e"></div>
<div class="t" style="left:1061px;top:484.68px;font-size:11.6px;color:#f2f2f2;font-weight:normal;">BorderColor3</div>
<div class="a" style="left:1216px;top:482px;width:20px;height:17px;background:#a0a0a0;border:1px solid #5e5e5e"></div>
<div class="t" style="left:1242px;top:484.68px;font-size:11.6px;color:#f2f2f2;font-weight:normal;">ControlDark</div>
<div class="a" style="left:1039px;top:525px;width:327px;height:1px;background:#5e5e5e"></div>
<div class="a" style="left:1212px;top:502px;width:1px;height:23px;background:#5e5e5e"></div>
<div class="t" style="left:1061px;top:507.68px;font-size:11.6px;color:#f2f2f2;font-weight:normal;">BorderColor4</div>
<div class="a" style="left:1216px;top:505px;width:20px;height:17px;background:#a0a0a0;border:1px solid #5e5e5e"></div>
<div class="t" style="left:1242px;top:507.68px;font-size:11.6px;color:#f2f2f2;font-weight:normal;">ControlDark</div>
<div class="a" style="left:1039px;top:548px;width:327px;height:1px;background:#5e5e5e"></div>
<div class="a" style="left:1212px;top:525px;width:1px;height:23px;background:#5e5e5e"></div>
<div class="t" style="left:1061px;top:530.68px;font-size:11.6px;color:#f2f2f2;font-weight:normal;">BorderDashPattern</div>
<div class="a" style="left:1039px;top:571px;width:327px;height:1px;background:#5e5e5e"></div>
<div class="a" style="left:1212px;top:548px;width:1px;height:23px;background:#5e5e5e"></div>
<div class="t" style="left:1061px;top:553.68px;font-size:11.6px;color:#f2f2f2;font-weight:normal;">BorderDashStyle</div>
<div class="t" style="left:1215px;top:553.68px;font-size:11.6px;color:#f2f2f2;font-weight:normal;">Solid</div>
<div class="a" style="left:1039px;top:594px;width:327px;height:1px;background:#5e5e5e"></div>
<div class="a" style="left:1212px;top:571px;width:1px;height:23px;background:#5e5e5e"></div>
<div class="t" style="left:1061px;top:578.36px;font-size:10.8px;color:#fff;font-weight:bold;">BorderDrawMode</div>
<svg class="a" style="left:1201px;top:578px" width="11" height="12" viewBox="0 0 11 12"><path d="M7 8.5H0.5V0.5H8.5V5" stroke="#eee" stroke-width="1" fill="none"/><path d="M8.5 5V11M6 8.5L8.5 11.5L11 8.5" stroke="#eee" stroke-width="1.2" fill="none"/></svg>
<div class="t" style="left:1215px;top:578.36px;font-size:10.8px;color:#fff;font-weight:bold;">VerticalOverHorizontal</div>
<div class="a" style="left:1039px;top:617px;width:327px;height:1px;background:#5e5e5e"></div>
<div class="a" style="left:1212px;top:594px;width:1px;height:23px;background:#5e5e5e"></div>
<div class="t" style="left:1061px;top:599.68px;font-size:11.6px;color:#f2f2f2;font-weight:normal;">BorderGradientAngle</div>
<div class="t" style="left:1215px;top:599.68px;font-size:11.6px;color:#f2f2f2;font-weight:normal;">270</div>
<div class="a" style="left:1039px;top:640px;width:327px;height:1px;background:#5e5e5e"></div>
<div class="a" style="left:1212px;top:617px;width:1px;height:23px;background:#5e5e5e"></div>
<div class="t" style="left:1061px;top:624.36px;font-size:10.8px;color:#fff;font-weight:bold;">BorderGradientStyle</div>
<svg class="a" style="left:1201px;top:624px" width="11" height="12" viewBox="0 0 11 12"><path d="M7 8.5H0.5V0.5H8.5V5" stroke="#eee" stroke-width="1" fill="none"/><path d="M8.5 5V11M6 8.5L8.5 11.5L11 8.5" stroke="#eee" stroke-width="1.2" fill="none"/></svg>
<div class="t" style="left:1215px;top:624.36px;font-size:10.8px;color:#fff;font-weight:bold;">Solid</div>
<div class="a" style="left:1039px;top:663px;width:327px;height:1px;background:#5e5e5e"></div>
<div class="a" style="left:1212px;top:640px;width:1px;height:23px;background:#5e5e5e"></div>
<div class="t" style="left:1061px;top:645.68px;font-size:11.6px;color:#f2f2f2;font-weight:normal;">BorderHighlightColor</div>
<div class="a" style="left:1216px;top:643px;width:20px;height:17px;background:#fff;border:1px solid #5e5e5e"></div>
<div class="t" style="left:1242px;top:645.68px;font-size:11.6px;color:#f2f2f2;font-weight:normal;">White</div>
<div class="a" style="left:1039px;top:686px;width:327px;height:1px;background:#5e5e5e"></div>
<div class="a" style="left:1212px;top:663px;width:1px;height:23px;background:#5e5e5e"></div>
<div class="t" style="left:1061px;top:668.68px;font-size:11.6px;color:#f2f2f2;font-weight:normal;">BorderHighlightThickness</div>
<div class="t" style="left:1215px;top:668.68px;font-size:11.6px;color:#f2f2f2;font-weight:normal;">1</div>
<div class="a" style="left:1039px;top:709px;width:327px;height:1px;background:#5e5e5e"></div>
<div class="a" style="left:1212px;top:686px;width:1px;height:23px;background:#5e5e5e"></div>
<div class="t" style="left:1061px;top:691.68px;font-size:11.6px;color:#f2f2f2;font-weight:normal;">BorderInnerColor</div>
<div class="a" style="left:1216px;top:689px;width:20px;height:17px;background:#fff;border:1px solid #5e5e5e"></div>
<div class="t" style="left:1242px;top:691.68px;font-size:11.6px;color:#f2f2f2;font-weight:normal;">ControlLightLight</div>
<div class="a" style="left:1039px;top:732px;width:327px;height:1px;background:#5e5e5e"></div>
<div class="a" style="left:1212px;top:709px;width:1px;height:23px;background:#5e5e5e"></div>
<div class="t" style="left:1061px;top:714.68px;font-size:11.6px;color:#f2f2f2;font-weight:normal;">BorderInnerColor2</div>
<div class="a" style="left:1216px;top:712px;width:20px;height:17px;background:#f0f0f0;border:1px solid #5e5e5e"></div>
<div class="t" style="left:1242px;top:714.68px;font-size:11.6px;color:#f2f2f2;font-weight:normal;">Control</div>
<div class="a" style="left:1039px;top:755px;width:327px;height:1px;background:#5e5e5e"></div>
<div class="a" style="left:1212px;top:732px;width:1px;height:23px;background:#5e5e5e"></div>
<div class="t" style="left:1061px;top:737.68px;font-size:11.6px;color:#f2f2f2;font-weight:normal;">BorderInnerColor3</div>
<div class="a" style="left:1216px;top:735px;width:20px;height:17px;background:#a0a0a0;border:1px solid #5e5e5e"></div>
<div class="t" style="left:1242px;top:737.68px;font-size:11.6px;color:#f2f2f2;font-weight:normal;">ControlDark</div>
</div>
<div class="a" style="left:1039px;top:341px;width:328px;height:24px;border:1px solid #4b7fd6"></div>
<svg class="a" style="left:1371px;top:346px" width="8" height="5" viewBox="0 0 8 5"><path d="M0 5L4 0L8 5Z" fill="#111"/></svg>
<div class="a" style="left:1370px;top:359px;width:9px;height:159px;background:#7a7a7a;border-radius:4px"></div>
<svg class="a" style="left:1371px;top:732px" width="8" height="5" viewBox="0 0 8 5"><path d="M0 0L4 5L8 0Z" fill="#111"/></svg>
<div class="a" style="left:1039px;top:743px;width:344px;height:2px;background:#3a3a3a"></div>
<div class="a" style="left:1039px;top:745px;width:344px;height:5px;background:#7f7f7f"></div>
<div class="a" style="left:1201px;top:747px;width:2px;height:2px;background:#111"></div>
<div class="a" style="left:1205px;top:747px;width:2px;height:2px;background:#111"></div>
<div class="a" style="left:1209px;top:747px;width:2px;height:2px;background:#111"></div>
<div class="a" style="left:1213px;top:747px;width:2px;height:2px;background:#111"></div>
<div class="a" style="left:1217px;top:747px;width:2px;height:2px;background:#111"></div>
<div class="a" style="left:1039px;top:750px;width:344px;height:60px;background:#474747"></div>
<div class="t" style="left:1041.5px;top:756.01px;font-size:11.8px;color:#fff;font-weight:bold;">BorderBottomColor</div>
<div class="a" style="left:1038px;top:810px;width:346px;height:1px;background:#3d3d3d"></div>
<div class="t" style="left:606.5px;top:825.53px;font-size:11.9px;color:#f2f2f2;font-weight:normal;">Pick the tool and drop it over a RadControl to</div>
<div class="t" style="left:606.5px;top:841.73px;font-size:11.9px;color:#f2f2f2;font-weight:normal;">explore it</div>
<div class="t" style="left:606.5px;top:871.73px;font-size:11.9px;color:#f2f2f2;font-weight:normal;">Selected control:</div>
<svg class="a" style="left:885px;top:828px" width="21" height="21" viewBox="0 0 21 21"><circle cx="10.5" cy="10.5" r="8.3" stroke="#111" stroke-width="1.2" fill="none"/><path d="M10.5 0.5V20.5M0.5 10.5H20.5" stroke="#111" stroke-width="1.2"/></svg>
<div class="a" style="left:961px;top:820px;width:13px;height:13px;border:1px solid #2a2a2a;background:#606060"></div>
<div class="t" style="left:977px;top:821.34px;font-size:11.65px;color:#f2f2f2;font-weight:normal;">Select after mouse hovers the element for 3 seconds</div>
<div class="a" style="left:961px;top:845px;width:13px;height:13px;border:1px solid #f0f0f0;background:#5a5a5a"></div>
<svg class="a" style="left:963px;top:847px" width="9" height="9" viewBox="0 0 9 9"><path d="M1 4.5L3.5 7.5L8 1" stroke="#fff" stroke-width="1.6" fill="none"/></svg>
<div class="t" style="left:977px;top:846.81px;font-size:11.8px;color:#f2f2f2;font-weight:normal;">Hide Spy while aiming</div>
<div class="t" style="left:963px;top:871.87px;font-size:11.5px;color:#f2f2f2;font-weight:normal;">Selected element: GridTableHeaderRowElement</div>
<div class="a" style="left:1391px;top:254px;width:7px;height:259px;background:#474747"></div>
<div class="a" style="left:1391px;top:513px;width:7px;height:5px;background:#5f5f5f"></div>
<div class="a" style="left:1391px;top:518px;width:7px;height:10px;background:#b4b4b4"></div>
<div class="a" style="left:1391px;top:528px;width:7px;height:11px;background:linear-gradient(#9a9a9a,#858585)"></div>
<div class="a" style="left:1391px;top:539px;width:7px;height:12px;background:#5a5a5a"></div>
<div class="a" style="left:1391px;top:551px;width:7px;height:21px;background:linear-gradient(#4f6389,#3e5078)"></div>
<div class="a" style="left:1391px;top:572px;width:7px;height:9px;background:#5a5a5a"></div>
<div class="a" style="left:1391px;top:581px;width:7px;height:22px;background:#333"></div>
<div class="a" style="left:1391px;top:603px;width:7px;height:24px;background:#5a5a5a"></div>
<div class="a" style="left:1391px;top:627px;width:7px;height:48px;background:#a14b52;border-bottom:2px solid #d8a0a0"></div>
<div class="a" style="left:1391px;top:675px;width:7px;height:221px;background:#232323"></div>
<div class="a" style="left:1391px;top:726px;width:7px;height:1px;background:#3a3a3a"></div>
<div class="a" style="left:1391px;top:776px;width:7px;height:1px;background:#3a3a3a"></div>
<div class="a" style="left:1125px;top:892px;width:16px;height:4px;background:#666"></div>
<div class="a" style="left:1131px;top:892px;width:4px;height:4px;background:#888"></div>
<div class="a" style="left:1147px;top:892px;width:25px;height:4px;background:#5a5a5a"></div>
<div class="a" style="left:1158px;top:892px;width:4px;height:4px;background:#4aa8e0"></div>
<div class="a" style="left:1188px;top:892px;width:13px;height:4px;border:1px solid #eee;border-bottom:none"></div>
<div class="a" style="left:1018px;top:327px;width:340px;height:41px;border:5px solid #e8202a"></div>
<div class="a" style="left:1028px;top:384px;width:290px;height:51px;border:5px solid #e8202a"></div>
<div class="a" style="left:689px;top:489px;width:263px;height:34px;border:5px solid #e8202a"></div>
</body></html>
